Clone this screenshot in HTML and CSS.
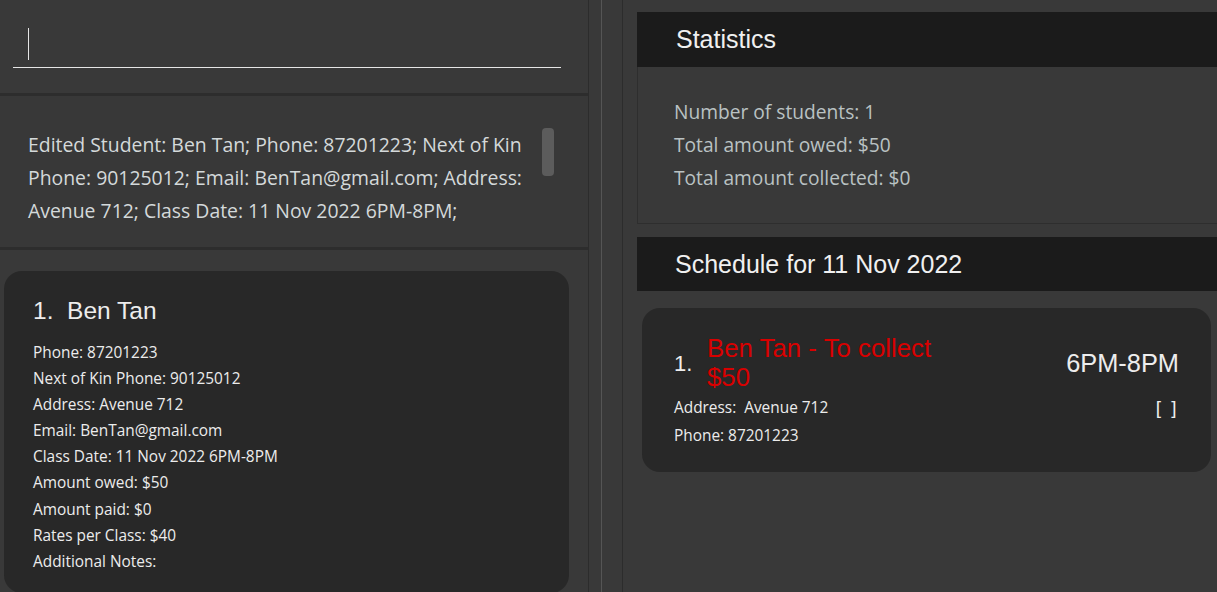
FILE: index.html
```html
<!DOCTYPE html>
<html>
<head>
<meta charset="utf-8">
<link rel="stylesheet" href="styles.css">
</head>
<body>
<div class="app">
  <div class="left">
    <div class="command">
      <div class="cmd-field"><span class="caret"></span></div>
    </div>
    <div class="result">
      <div class="result-text">Edited Student: Ben Tan; Phone: 87201223; Next of Kin Phone: 90125012; Email: BenTan@gmail.com; Address: Avenue 712; Class Date: 11 Nov 2022 6PM-8PM;</div>
      <div class="scroll-thumb"></div>
    </div>
    <div class="list">
      <div class="card">
        <div class="card-title">1.&nbsp; Ben Tan</div>
        <div class="card-line">Phone: 87201223</div>
        <div class="card-line">Next of Kin Phone: 90125012</div>
        <div class="card-line">Address: Avenue 712</div>
        <div class="card-line">Email: BenTan@gmail.com</div>
        <div class="card-line">Class Date: 11 Nov 2022 6PM-8PM</div>
        <div class="card-line">Amount owed: $50</div>
        <div class="card-line">Amount paid: $0</div>
        <div class="card-line">Rates per Class: $40</div>
        <div class="card-line">Additional Notes:</div>
      </div>
    </div>
  </div>
  <div class="divider"><div class="divider-line"></div></div>
  <div class="right">
    <div class="panel-header">Statistics</div>
    <div class="stats">
      <div class="stat-line">Number of students: 1</div>
      <div class="stat-line">Total amount owed: $50</div>
      <div class="stat-line">Total amount collected: $0</div>
    </div>
    <div class="panel-header sched-header">Schedule for 11 Nov 2022</div>
    <div class="sched-list">
      <div class="sched-card">
        <div class="sched-top">
          <div class="sched-index">1.</div>
          <div class="sched-name">Ben Tan - To collect<br>$50</div>
          <div class="sched-time">6PM-8PM</div>
        </div>
        <div class="sched-row">
          <div class="sched-line">Address:&nbsp; Avenue 712</div>
          <div class="sched-tags">[ ]</div>
        </div>
        <div class="sched-line">Phone: 87201223</div>
      </div>
    </div>
  </div>
</div>
</body>
</html>
```

FILE: styles.css
```css
* { box-sizing: border-box; }
html, body { margin: 0; padding: 0; }
body {
  background: #393939;
  width: 1217px;
  height: 592px;
  overflow: hidden;
  font-family: "Open Sans", "Noto Sans", sans-serif;
}
.app {
  display: flex;
  height: 592px;
}
.left {
  width: 589px;
  flex-shrink: 0;
  display: flex;
  flex-direction: column;
  border-right: 1px solid #2c2c2c;
  overflow: hidden;
}
.command {
  flex-shrink: 0;
  height: 93px;
  padding: 28px 27px 0 13px;
}
.cmd-field {
  height: 40px;
  border-bottom: 1px solid #e6e6e6;
  padding-left: 15px;
}
.caret {
  display: block;
  width: 1px;
  height: 32px;
  background: #e6e6e6;
}
.result {
  flex-shrink: 0;
  height: 157px;
  border-top: 3px solid #2d2d2d;
  border-bottom: 3px solid #2d2d2d;
  background: #383838;
  display: flex;
  padding: 32px 0 0 28px;
  position: relative;
}
.result-text {
  width: 508px;
  font-size: 19.4px;
  line-height: 33px;
  color: #d4d9da;
}
.scroll-thumb {
  position: absolute;
  left: 542px;
  top: 32px;
  width: 12px;
  height: 48px;
  border-radius: 4px;
  background: #5c5c5c;
}
.list {
  flex: 1;
  padding: 21px 19px 0 4px;
}
.card {
  background: #282828;
  border-radius: 18px;
  padding: 25px 29px 20px 29px;
  height: 322px;
}
.card-title {
  font-family: "Liberation Sans", Arial, sans-serif;
  font-size: 24.5px;
  color: #ededed;
  line-height: 30px;
  margin-bottom: 14px;
}
.card-line {
  font-size: 15.4px;
  line-height: 26.1px;
  color: #ececec;
}
.divider {
  width: 34px;
  flex-shrink: 0;
  border-right: 1px solid #2c2c2c;
  display: flex;
  justify-content: center;
  padding-right: 9px;
}
.divider-line {
  width: 1px;
  background: #555;
}
.right {
  flex: 1;
  padding: 12px 0 0 14px;
  display: flex;
  flex-direction: column;
}
.panel-header {
  flex-shrink: 0;
  height: 55px;
  background: #1b1b1b;
  color: #f0f0f0;
  font-family: "Liberation Sans", Arial, sans-serif;
  font-size: 25px;
  line-height: 55px;
  padding-left: 39px;
}
.stats {
  flex-shrink: 0;
  height: 157px;
  background: #393939;
  border-left: 1px solid #2e2e2e;
  border-bottom: 1px solid #2e2e2e;
  padding: 28px 0 0 36px;
}
.stat-line {
  font-size: 19.2px;
  line-height: 33px;
  color: #bac2c3;
}
.sched-header {
  margin-top: 13px;
  height: 54px;
  line-height: 54px;
  padding-left: 38px;
}
.sched-list {
  padding: 17px 6px 0 5px;
}
.sched-card {
  background: #282828;
  border-radius: 18px;
  height: 164px;
  padding: 26px 32px 0 32px;
}
.sched-top {
  display: flex;
  align-items: center;
}
.sched-index {
  font-family: "Liberation Sans", Arial, sans-serif;
  font-size: 22px;
  color: #ededed;
  width: 33px;
  padding-top: 2px;
}
.sched-name {
  font-family: "Liberation Sans", Arial, sans-serif;
  font-size: 25.8px;
  line-height: 29px;
  color: #d90000;
  width: 262px;
}
.sched-time {
  margin-left: auto;
  font-family: "Liberation Sans", Arial, sans-serif;
  font-size: 25.4px;
  color: #ededed;
}
.sched-row {
  display: flex;
  justify-content: space-between;
  margin-top: 2px;
}
.sched-line {
  font-size: 15.4px;
  line-height: 28px;
  color: #ececec;
}
.sched-tags {
  font-family: "Liberation Sans", Arial, sans-serif;
  font-size: 19px;
  color: #ededed;
  line-height: 28px;
  letter-spacing: 2.5px;
}
```
